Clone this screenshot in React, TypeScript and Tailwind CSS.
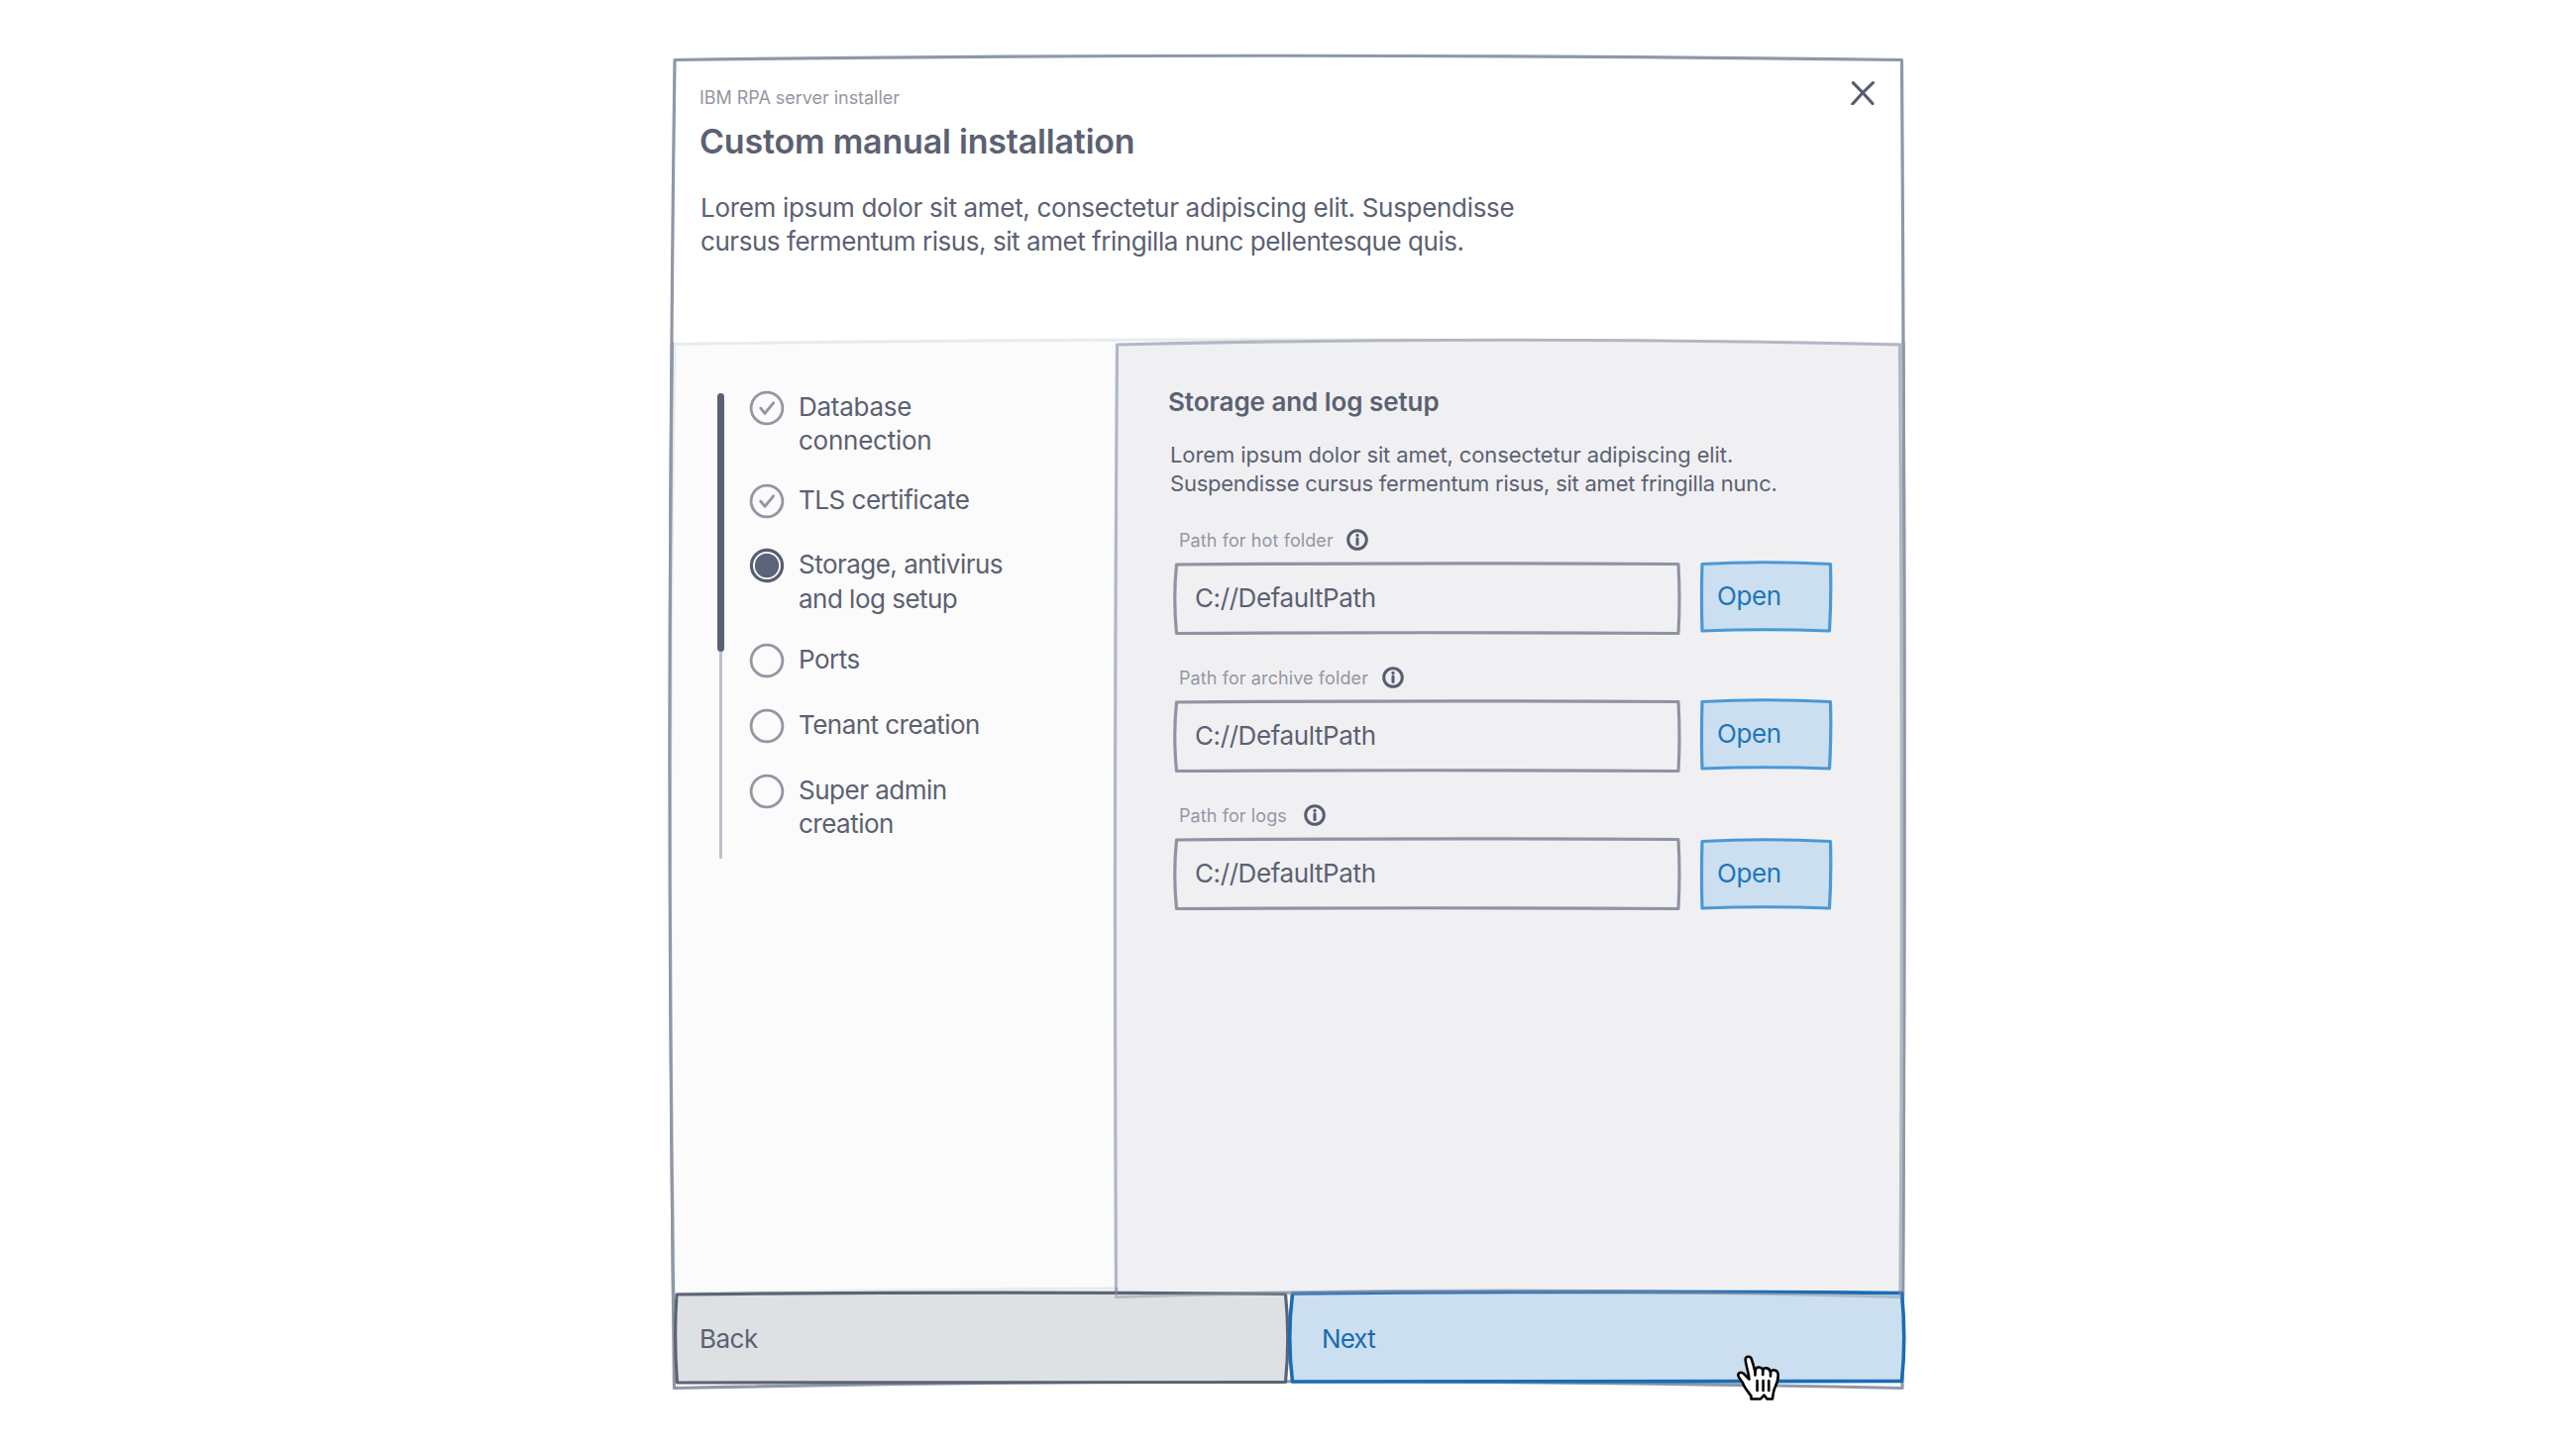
import React from "react";

type SketchProps = {
  viewBox: string;
  d: string;
  className: string;
};

/* Hand-drawn outline that sits behind the content of a box. */
function Sketch({ viewBox, d, className }: SketchProps) {
  return (
    <svg
      viewBox={viewBox}
      preserveAspectRatio="none"
      className={`pointer-events-none absolute inset-0 h-full w-full overflow-visible ${className}`}
      strokeLinejoin="round"
      aria-hidden="true"
    >
      <path d={d} />
    </svg>
  );
}

function InfoIcon() {
  return (
    <svg viewBox="0 0 22 22" className="size-[22px] shrink-0" fill="none" stroke="#565e70" aria-hidden="true">
      <circle cx="11" cy="11" r="9.3" strokeWidth="3" />
      <path d="M11 9.8V15.6" strokeWidth="3" strokeLinecap="round" />
      <circle cx="11" cy="6.4" r="1.6" fill="#565e70" stroke="none" />
    </svg>
  );
}

type StepState = "done" | "current" | "todo";

function StepIcon({ state }: { state: StepState }) {
  return (
    <svg viewBox="0 0 36 36" className="-mb-2 size-9 shrink-0" fill="none" aria-hidden="true">
      {state === "current" ? (
        <>
          <circle cx="18" cy="18" r="15.6" stroke="#565e70" strokeWidth="3.2" fill="#fdfdfe" />
          <circle cx="18" cy="18" r="12.2" fill="#5b6378" />
        </>
      ) : (
        <circle cx="18" cy="18" r="15.9" stroke="#9397a3" strokeWidth="2.8" />
      )}
      {state === "done" && (
        <path d="M11.8 18.2L16 23.4L24.6 12.8" stroke="#9397a3" strokeWidth="2.9" strokeLinecap="round" strokeLinejoin="round" />
      )}
    </svg>
  );
}

const steps: { lines: string[]; state: StepState; gap: string; tracking: string }[] = [
  { lines: ["Database", "connection"], state: "done", gap: "", tracking: "tracking-[-0.25px]" },
  { lines: ["TLS certificate"], state: "done", gap: "mt-[25px]", tracking: "tracking-[-0.48px]" },
  { lines: ["Storage, antivirus", "and log setup"], state: "current", gap: "mt-[31px]", tracking: "tracking-[-0.52px]" },
  { lines: ["Ports"], state: "todo", gap: "mt-[27px]", tracking: "tracking-[-0.5px]" },
  { lines: ["Tenant creation"], state: "todo", gap: "mt-8", tracking: "tracking-[-0.54px]" },
  { lines: ["Super admin", "creation"], state: "todo", gap: "mt-[31px]", tracking: "tracking-[-0.5px]" },
];

const fields = [
  { label: "Path for hot folder", iconGap: "ml-[13px]", buttonShift: "" },
  { label: "Path for archive folder", iconGap: "ml-[14px]", buttonShift: "" },
  { label: "Path for logs", iconGap: "ml-[17px]", buttonShift: "mt-[2px] -mb-[2px]" },
];

function PathField({ label, iconGap, buttonShift }: { label: string; iconGap: string; buttonShift: string }) {
  return (
    <div className="flex h-[139px] flex-col">
      <div className="mt-px ml-[10px] flex h-6 items-center">
        <span className="text-[18px] leading-6 tracking-[0.1px] text-[#9397a3]">{label}</span>
        <span className={`-mt-px flex ${iconGap}`}>
          <InfoIcon />
        </span>
      </div>
      <div className="mt-[11px] ml-[6px] flex h-[70px]">
        <div className="relative flex w-[508px] items-center">
          <Sketch
            viewBox="0 0 508 70"
            d="M1.5 1Q250 -1 508 0.5Q510 35 508 70.5Q250 69 1.5 70.5Q-2 35 1.5 1Z"
            className="fill-none stroke-[#8f94a2] stroke-[3.2px]"
          />
          <span className="relative ml-[20px] text-[26px] leading-[34px] tracking-[-0.4px] text-[#5b6172]">
            C://DefaultPath
          </span>
        </div>
        <button className={`relative ml-[23px] flex w-[130px] items-start text-left ${buttonShift}`}>
          <Sketch
            viewBox="0 0 130 70"
            d="M1 0.5Q65 -3 130.5 0.5Q131.5 35 129.5 68Q65 65.5 1 68Q0 35 1 0.5Z"
            className="fill-[#cbdff1] stroke-[#4b98d5] stroke-[3.2px]"
          />
          <span className="relative ml-4 pt-[16px] text-[26px] leading-[34px] tracking-[-0.4px] text-[#1d76bb]">
            Open
          </span>
        </button>
      </div>
    </div>
  );
}

export default function App() {
  return (
    <main className="flex h-[1463px] w-[2600px] justify-center bg-white pt-[60px] font-['Inter','Liberation_Sans',sans-serif] text-[#5b6172]">
      <div className="relative flex h-[1342px] w-[1240px] flex-col">
        <Sketch
          viewBox="0 0 1240 1342"
          d="M1 0.5Q620 -8 1239.5 0.5Q1244 660 1240 1341.5Q620 1328 0.5 1341.5Q-8 660 1 0.5Z"
          className="fill-white stroke-[#8f98a6] stroke-[3.2px]"
        />

        <header className="relative flex h-[287px] justify-between pr-[28px] pl-[26px]">
          <div className="pt-[27px]">
            <p className="text-[18px] leading-6 tracking-[-0.04px] text-[#9397a3]">IBM RPA server installer</p>
            <h1 className="mt-[10px] text-[34px] leading-[44px] font-semibold tracking-[-0.2px] text-[#5b6172]">
              Custom manual installation
            </h1>
            <p className="mt-[28px] ml-px text-[26px] leading-[34.4px] tracking-[-0.32px] text-[#5b6172]">
              Lorem ipsum dolor sit amet, consectetur adipiscing elit. Suspendisse
              <br />
              <span className="tracking-[-0.45px]">
                cursus fermentum risus, sit amet fringilla nunc pellentesque quis.
              </span>
            </p>
          </div>
          <button className="mt-[22px] flex size-6" aria-label="Close">
            <svg viewBox="0 0 24 24" className="size-6" fill="none" stroke="#565d70" strokeWidth="3.1" strokeLinecap="round">
              <path d="M2.4 1.6Q12 11 22 22.6M22.4 1.6Q11 12 1.8 23" />
            </svg>
          </button>
        </header>

        <div className="relative flex h-[959px]">
          <Sketch
            viewBox="0 0 1240 959"
            d="M1 0.5Q620 -9 1239.5 0.5Q1242 480 1240 959Q620 948 0.5 959Q-7 480 1 0.5Z"
            className="fill-[#fbfbfb] stroke-[#d6dede]/55 stroke-3"
          />
          {/* The dialog outline is drawn again along both sides of the body. */}
          <svg
            viewBox="0 0 1240 959"
            className="pointer-events-none absolute inset-0 h-full w-full overflow-visible fill-none stroke-[#8f98a6] stroke-[3.2px]"
            aria-hidden="true"
          >
            <path d="M-1.6 -2Q-7 466 -0.4 961M1241 -2Q1243.5 466 1240.6 961" />
          </svg>

          <nav className="relative flex w-[447px] pt-[47px] pl-[44px]">
            <div className="mt-[3px] flex h-[470px] w-[7px] flex-col items-center">
              <div className="h-[261px] w-[7px] shrink-0 rounded-full bg-[#5b6175]" />
              <div className="w-[3px] grow rounded-b-full bg-[#b9c1cc]" />
            </div>
            <ol className="ml-[25px] flex flex-col">
              {steps.map((step) => (
                <li key={step.lines[0]} className={`flex items-start ${step.gap}`}>
                  <StepIcon state={step.state} />
                  <span className={`ml-[14px] text-[26px] leading-[34.4px] ${step.tracking}`}>
                    {step.lines.map((line) => (
                      <span key={line} className="block">
                        {line}
                      </span>
                    ))}
                  </span>
                </li>
              ))}
            </ol>
          </nav>

          <section className="relative w-[791px] pt-[42px] pl-[53px]">
            <Sketch
              viewBox="0 0 791 959"
              d="M0.5 1Q395 -8.5 790.5 1Q794 480 791 962Q395 950 -0.5 962Q-3 480 0.5 1Z"
              className="fill-[#f0f0f3] stroke-[#b1b8c4] stroke-[3.2px]"
            />
            <div className="relative">
              <h2 className="-ml-px text-[26px] leading-[34px] font-semibold tracking-[-0.06px]">Storage and log setup</h2>
              <p className="mt-[22px] ml-px text-[22px] leading-[29.3px] tracking-[-0.24px]">
                <span className="tracking-[-0.11px]">Lorem ipsum dolor sit amet, consectetur adipiscing elit.</span>
                <br />
                Suspendisse cursus fermentum risus, sit amet fringilla nunc.
              </p>
              <div className="mt-[29px] flex flex-col">
                {fields.map((field) => (
                  <PathField key={field.label} {...field} />
                ))}
              </div>
            </div>
          </section>
        </div>

        <footer className="relative flex h-[90px]">
          <button className="relative flex w-[620px] items-center text-left">
            <Sketch
              viewBox="0 0 620 90"
              d="M3 1Q310 -2.5 617.5 0.5Q622 45 617.5 89.5Q310 89.5 3.5 90Q0 45 3 1Z"
              className="fill-[#dde1e4] stroke-[#5d6374] stroke-[3.2px]"
            />
            <span className="relative mt-[2px] ml-[26px] text-[26px] leading-[34px] tracking-[-0.5px] text-[#5b6172]">Back</span>
          </button>
          <button className="relative flex w-[620px] items-center text-left">
            <Sketch
              viewBox="0 0 620 90"
              d="M4.5 0Q310 -3 619.5 -0.5Q624 45 619.5 88.5Q310 88 4.5 89Q-1 45 4.5 0Z"
              className="fill-[#cbdff0] stroke-[#1c6cb4] stroke-[3.6px]"
            />
            <span className="relative mt-[2px] ml-[34px] text-[26px] leading-[34px] tracking-[-0.9px] text-[#1d69ae]">Next</span>
          </button>

          {/* Lower edge of the settings panel, showing through the buttons. */}
          <svg
            viewBox="0 0 1240 90"
            className="pointer-events-none absolute inset-0 h-full w-full overflow-visible fill-none stroke-[#8f959f]/50 stroke-3"
            aria-hidden="true"
          >
            <path d="M447 -6L446.5 3.5Q842 -8 1238 3.5V-2" />
          </svg>

          <svg
            viewBox="0 0 44 46"
            className="absolute top-[62px] left-[1073px] h-[46px] w-11 fill-white stroke-black"
            strokeWidth="2.6"
            strokeLinejoin="round"
            strokeLinecap="round"
            aria-label="Pointer"
          >
            <path d="M14.5 44.5V41.5C11.5 37.5 8 33.5 6.5 29.5C5.5 26 1.5 23.5 1.3 20.5C1.2 18 4 17 6.5 18.5L12.5 24.5C12 18 9 10 8.7 5C8.5 1 13.5 0.6 14.8 4C16.3 8.5 17.5 13 18.5 17.5C18 11.5 25 11 26.3 15.5C27 12.2 33 12.5 34 17.2C35.5 14 41 15 41.6 19C42.2 24 40.5 29 38.5 33C37 36 36.5 40 36 44.5H30.5L27.5 40.5L24 44.5Z" />
            <path d="M18.5 17.5V20.5M26.3 15.5V20M34 17.2V21.5M20.6 26V36M26.6 26V36M32.3 26V36" fill="none" />
          </svg>
        </footer>
      </div>
    </main>
  );
}
